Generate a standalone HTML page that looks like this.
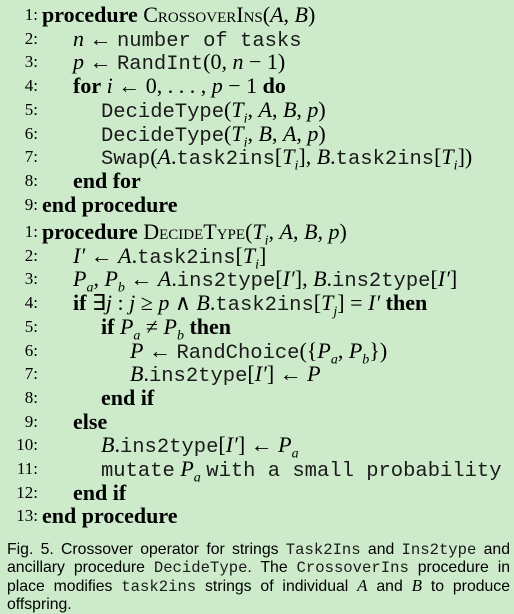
<!DOCTYPE html><html><head><style>
body{margin:0;width:514px;height:613px;background:#cdebcb;overflow:hidden;font-family:"Liberation Serif",serif;color:#000;}
.l{position:absolute;left:0;width:514px;height:24px;line-height:24px;font-size:22px;white-space:nowrap}
.n{position:absolute;right:476px;font-size:17px;text-align:right}
.c{position:absolute}
b{font-weight:bold}
.m{font-family:"Liberation Mono",monospace;font-size:20.5px;color:#1a1a1a}
i{font-style:italic}
sub{font-size:14px;line-height:0}
.sc{font-variant:small-caps}
.cap{position:absolute;left:7px;top:541px;width:503px;font-family:"Liberation Sans",sans-serif;font-size:15.8px;line-height:18px;text-align:justify}
.cap .m{font-size:15.6px}
.cap i{font-family:"Liberation Serif",serif;font-size:17px}
</style></head><body>
<div class="l" style="top:3px"><span class="n">1:</span><span class="c" style="left:42px"><b>procedure</b> <span class="sc">CrossoverIns</span>(<i>A</i>, <i>B</i>)</span></div>
<div class="l" style="top:26.7px"><span class="n">2:</span><span class="c" style="left:73px"><i>n</i> ← <span class="m">number of tasks</span></span></div>
<div class="l" style="top:50.4px"><span class="n">3:</span><span class="c" style="left:73px"><i>p</i> ← <span class="m">RandInt</span>(0, <i>n</i> − 1)</span></div>
<div class="l" style="top:74.1px"><span class="n">4:</span><span class="c" style="left:73px"><b>for</b> <i>i</i> ← 0, . . . , <i>p</i> − 1 <b>do</b></span></div>
<div class="l" style="top:97.8px"><span class="n">5:</span><span class="c" style="left:101px"><span class="m">DecideType</span>(<i>T<sub>i</sub></i>, <i>A</i>, <i>B</i>, <i>p</i>)</span></div>
<div class="l" style="top:121.5px"><span class="n">6:</span><span class="c" style="left:101px"><span class="m">DecideType</span>(<i>T<sub>i</sub></i>, <i>B</i>, <i>A</i>, <i>p</i>)</span></div>
<div class="l" style="top:145.2px"><span class="n">7:</span><span class="c" style="left:101px"><span class="m">Swap</span>(<i>A</i>.<span class="m">task2ins</span>[<i>T<sub>i</sub></i>], <i>B</i>.<span class="m">task2ins</span>[<i>T<sub>i</sub></i>])</span></div>
<div class="l" style="top:168.9px"><span class="n">8:</span><span class="c" style="left:73px"><b>end for</b></span></div>
<div class="l" style="top:192.6px"><span class="n">9:</span><span class="c" style="left:42px"><b>end procedure</b></span></div>

<div class="l" style="top:220px"><span class="n">1:</span><span class="c" style="left:42px"><b>procedure</b> <span class="sc">DecideType</span>(<i>T<sub>i</sub></i>, <i>A</i>, <i>B</i>, <i>p</i>)</span></div>
<div class="l" style="top:243.7px"><span class="n">2:</span><span class="c" style="left:73px"><i>I′</i> ← <i>A</i>.<span class="m">task2ins</span>[<i>T<sub>i</sub></i>]</span></div>
<div class="l" style="top:267.4px"><span class="n">3:</span><span class="c" style="left:73px"><i>P<sub>a</sub></i>, <i>P<sub>b</sub></i> ← <i>A</i>.<span class="m">ins2type</span>[<i>I′</i>], <i>B</i>.<span class="m">ins2type</span>[<i>I′</i>]</span></div>
<div class="l" style="top:291.1px"><span class="n">4:</span><span class="c" style="left:73px"><b>if</b> ∃<i>j</i> : <i>j</i> ≥ <i>p</i> ∧ <i>B</i>.<span class="m">task2ins</span>[<i>T<sub>j</sub></i>] = <i>I′</i> <b>then</b></span></div>
<div class="l" style="top:314.8px"><span class="n">5:</span><span class="c" style="left:101px"><b>if</b> <i>P<sub>a</sub></i> ≠ <i>P<sub>b</sub></i> <b>then</b></span></div>
<div class="l" style="top:338.5px"><span class="n">6:</span><span class="c" style="left:130px"><i>P</i> ← <span class="m">RandChoice</span>({<i>P<sub>a</sub></i>, <i>P<sub>b</sub></i>})</span></div>
<div class="l" style="top:362.2px"><span class="n">7:</span><span class="c" style="left:130px"><i>B</i>.<span class="m">ins2type</span>[<i>I′</i>] ← <i>P</i></span></div>
<div class="l" style="top:385.9px"><span class="n">8:</span><span class="c" style="left:101px"><b>end if</b></span></div>
<div class="l" style="top:409.6px"><span class="n">9:</span><span class="c" style="left:73px"><b>else</b></span></div>
<div class="l" style="top:433.3px"><span class="n">10:</span><span class="c" style="left:101px"><i>B</i>.<span class="m">ins2type</span>[<i>I′</i>] ← <i>P<sub>a</sub></i></span></div>
<div class="l" style="top:457px"><span class="n">11:</span><span class="c" style="left:101px"><span class="m">mutate</span> <i>P<sub>a</sub></i> <span class="m">with a small probability</span></span></div>
<div class="l" style="top:480.7px"><span class="n">12:</span><span class="c" style="left:73px"><b>end if</b></span></div>
<div class="l" style="top:504.4px"><span class="n">13:</span><span class="c" style="left:42px"><b>end procedure</b></span></div>

<div class="cap">Fig. 5. Crossover operator for strings <span class="m">Task2Ins</span> and <span class="m">Ins2type</span> and ancillary procedure <span class="m">DecideType</span>. The <span class="m">CrossoverIns</span> procedure in place modifies <span class="m">task2ins</span> strings of individual <i>A</i> and <i>B</i> to produce offspring.</div>
</body></html>
